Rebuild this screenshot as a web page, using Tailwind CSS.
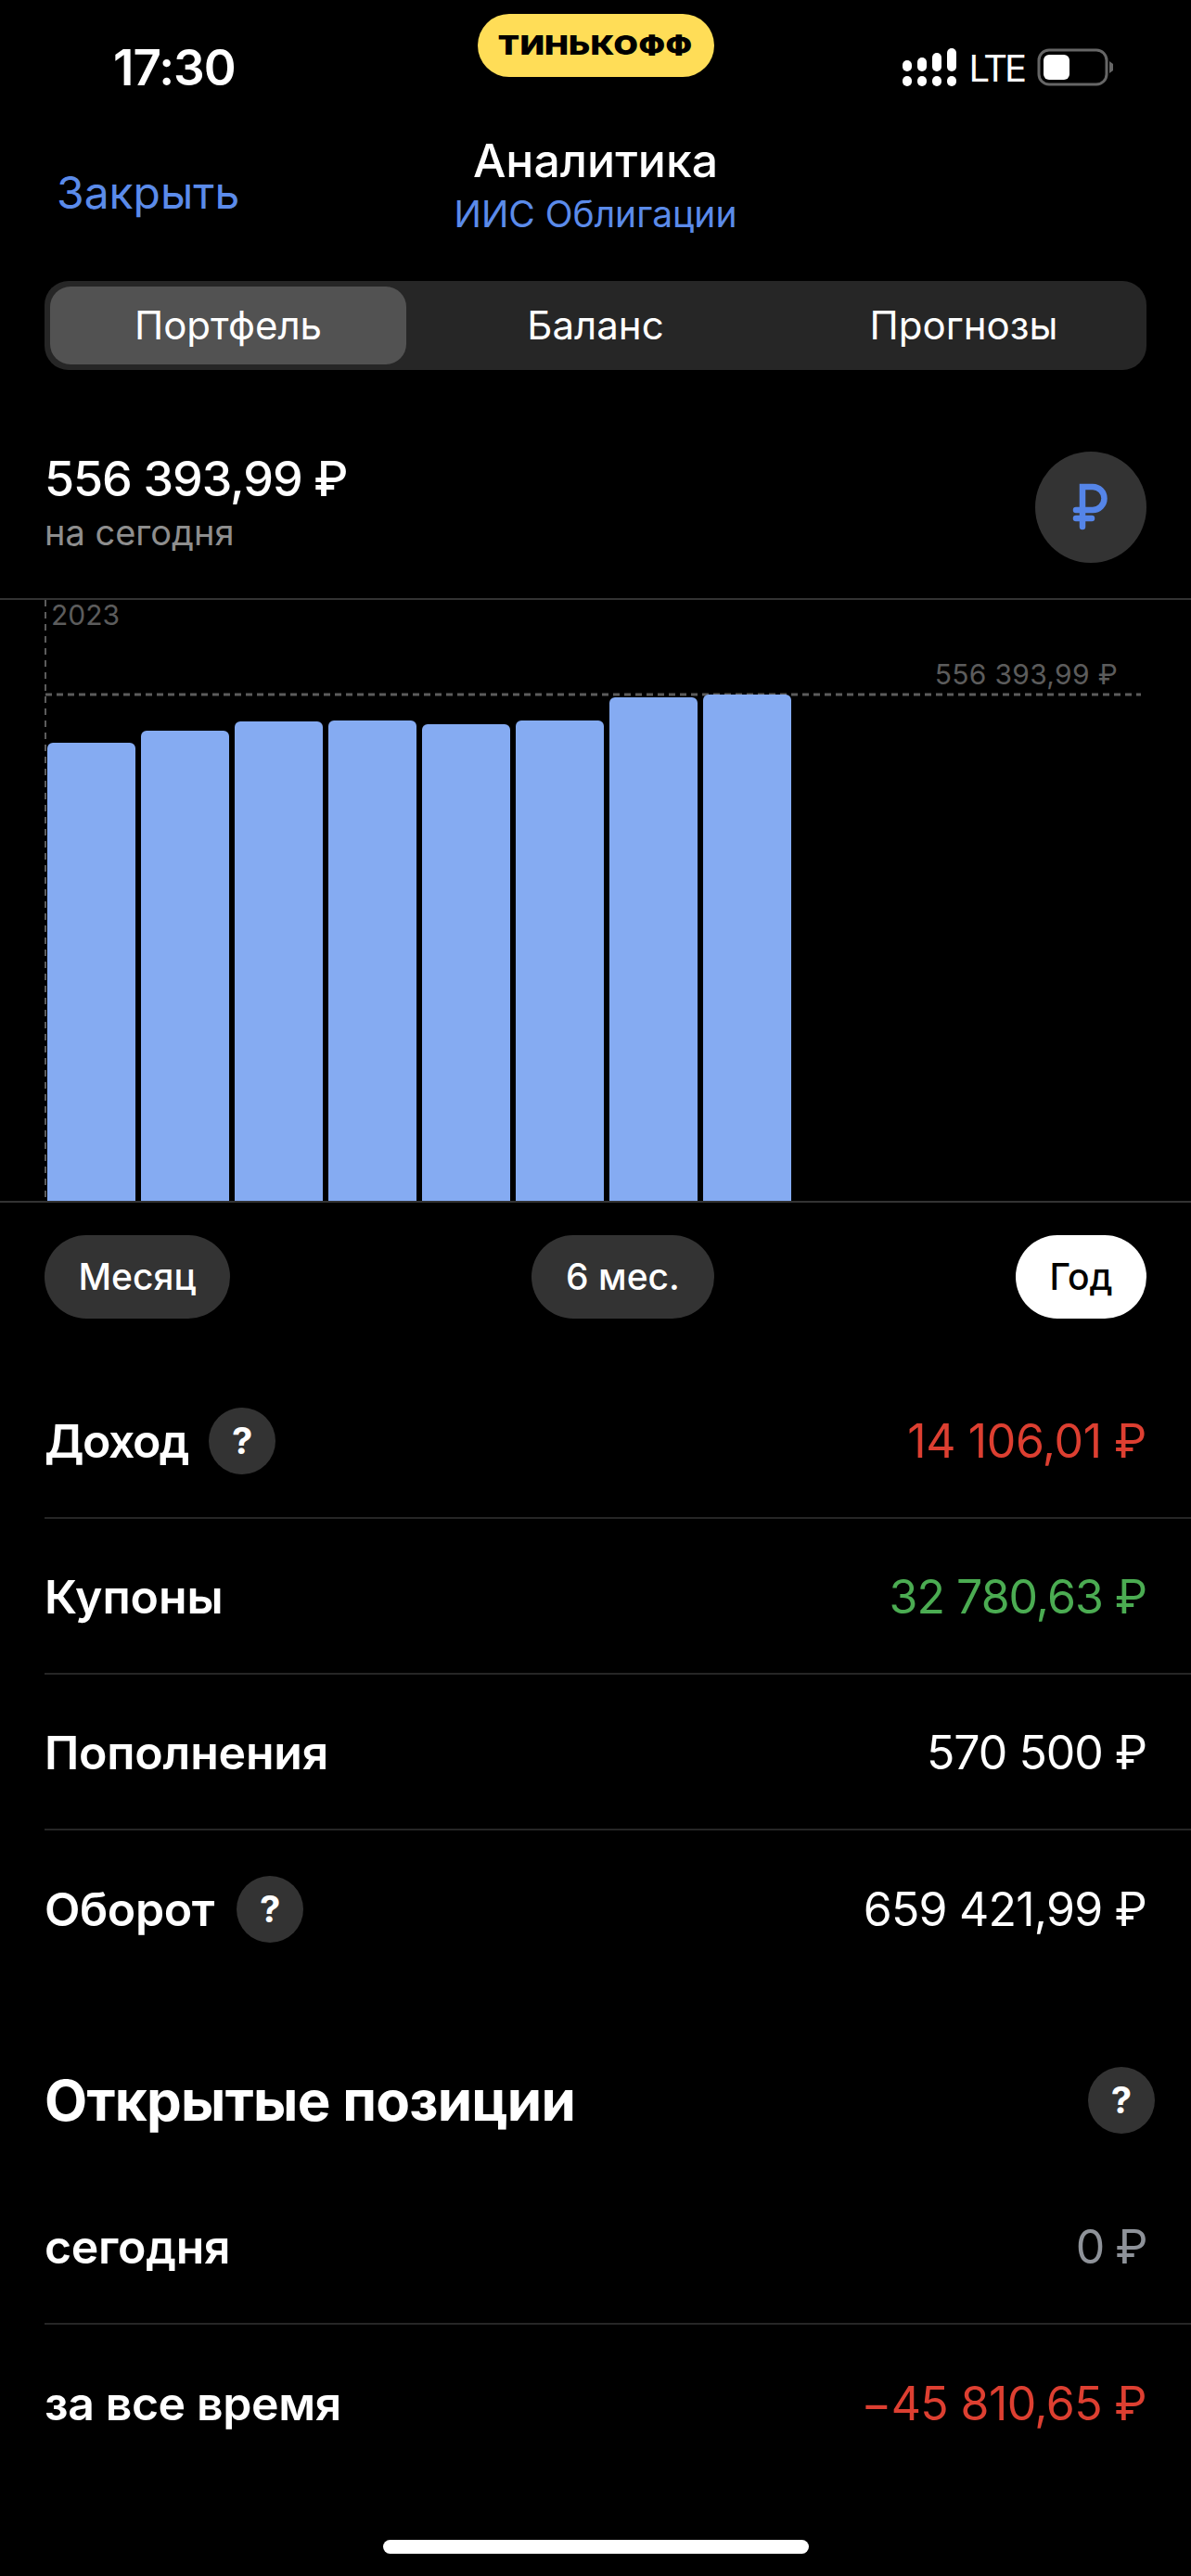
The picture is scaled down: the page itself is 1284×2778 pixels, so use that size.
<!DOCTYPE html>
<html lang="ru">
<head>
    <meta charset="UTF-8">
    <meta name="viewport" content="width=device-width, initial-scale=1.0">
    <title>Аналитика</title>
    <script src="https://cdn.jsdelivr.net/npm/@tailwindcss/browser@4"></script>
</head>
<body class="bg-black text-white font-['Inter','Noto_Sans',sans-serif] w-[1284px] h-[2778px] overflow-hidden">

    <!-- Status bar -->
    <div class="grid grid-cols-[1fr_255px_1fr] h-[144px]">
        <div class="pl-[122px] pt-[2px] self-center text-[53px] font-semibold leading-[60px] tracking-[-1px]">17:30</div>
        <div class="mt-[15px] h-[68px] rounded-[34px] bg-[#ffdd57] flex items-center justify-center">
            <span class="text-black text-[28px] font-black leading-none tracking-[0.5px] scale-x-[1.21]">ТИНЬКОФФ</span>
        </div>
        <div class="flex items-start pl-[203px]">
            <svg width="66" height="42" viewBox="0 0 66 42" class="mt-[52px]" fill="#fff">
                <rect x="0" y="13" width="10" height="12" rx="5"/>
                <rect x="16" y="10" width="10" height="15" rx="5"/>
                <rect x="32" y="5" width="10" height="20" rx="5"/>
                <rect x="48" y="0" width="10" height="25" rx="5"/>
                <rect x="0" y="30" width="10" height="11" rx="5"/>
                <rect x="16" y="30" width="10" height="11" rx="5"/>
                <rect x="32" y="30" width="10" height="11" rx="5"/>
                <rect x="48" y="30" width="10" height="11" rx="5"/>
            </svg>
            <span class="mt-[51px] ml-[6px] text-[40px] leading-[46px] font-normal tracking-[-3px] w-[73px]">LTE</span>
            <svg width="86" height="44" viewBox="0 0 86 44" class="mt-[51px]">
                <rect x="2" y="3" width="73" height="37" rx="11" fill="none" stroke="#666" stroke-width="3"/>
                <rect x="7" y="8" width="28" height="27" rx="6" fill="#fff"/>
                <path d="M78 15 L82 18 V25 L78 28 Z" fill="#666"/>
            </svg>
        </div>
    </div>

    <!-- Nav -->
    <div class="grid grid-cols-[1fr_auto_1fr] h-[159px]">
        <div class="pl-[61px] mt-[34px] text-[#5b8bea] text-[48px] leading-[60px]">Закрыть</div>
        <div class="text-center">
            <div class="text-[50px] leading-[58px] font-medium">Аналитика</div>
            <div class="mt-[7px] text-[#5b8bea] text-[39px] leading-[44px]">ИИС Облигации</div>
        </div>
        <div></div>
    </div>

    <!-- Tabs -->
    <div class="mx-[48px] h-[96px] p-[6px] rounded-[26px] bg-[#262626] grid grid-cols-3 text-[42px] leading-[84px] text-center">
        <div class="mr-[8px] rounded-[22px] bg-[#525252]">Портфель</div>
        <div>Баланс</div>
        <div class="pl-[10px]">Прогнозы</div>
    </div>

    <!-- Balance -->
    <div class="h-[248px] px-[48px] flex justify-between border-b-2 border-[#333]">
        <div class="pt-[88px]">
            <div class="text-[52px] leading-[60px] font-medium tracking-[-1.1px]">556 393,99 ₽</div>
            <div class="mt-[5px] text-[#8e8e8e] text-[38px] leading-[44px]">на сегодня</div>
        </div>
        <div class="mt-[88px] w-[120px] h-[120px] rounded-full bg-[#333]">
            <svg width="120" height="120" viewBox="0 0 120 120" fill="none" stroke="#5585e8" stroke-width="6.5" stroke-linecap="round">
                <path d="M51 81 V38 H62 a12.5 12.5 0 0 1 0 25 H44"/>
                <path d="M44 72 H61"/>
            </svg>
        </div>
    </div>

    <!-- Chart -->
    <div class="relative h-[650px] border-b-2 border-[#333] pl-[51px] flex items-end gap-[6px]">
        <svg class="absolute left-0 top-0" width="1284" height="648" fill="none" stroke="#5c5c5c" stroke-width="2">
            <path d="M49 0 V648" stroke-dasharray="7 6"/>
            <path d="M49 102 H1230" stroke-width="3" stroke-dasharray="7 5"/>
        </svg>
        <span class="absolute left-[55px] top-[-2px] text-[#5c5c5c] text-[30px] leading-[36px]">2023</span>
        <span class="absolute right-[79px] top-[62px] text-[#5c5c5c] text-[30px] leading-[36px] tracking-[0.3px]">556 393,99 ₽</span>
        <div class="relative w-[95px] h-[494px] rounded-t-[6px] bg-[#85abf2]"></div>
        <div class="relative w-[95px] h-[507px] rounded-t-[6px] bg-[#85abf2]"></div>
        <div class="relative w-[95px] h-[517px] rounded-t-[6px] bg-[#85abf2]"></div>
        <div class="relative w-[95px] h-[518px] rounded-t-[6px] bg-[#85abf2]"></div>
        <div class="relative w-[95px] h-[514px] rounded-t-[6px] bg-[#85abf2]"></div>
        <div class="relative w-[95px] h-[518px] rounded-t-[6px] bg-[#85abf2]"></div>
        <div class="relative w-[95px] h-[543px] rounded-t-[6px] bg-[#85abf2]"></div>
        <div class="relative w-[95px] h-[546px] rounded-t-[6px] bg-[#85abf2]"></div>
    </div>

    <!-- Period -->
    <div class="mt-[35px] px-[48px] flex justify-between text-[39px] leading-[90px] font-medium text-center">
        <div class="w-[200px] rounded-full bg-[#333]">Месяц</div>
        <div class="w-[197px] rounded-full bg-[#333]">6 мес.</div>
        <div class="w-[141px] rounded-full bg-white text-black">Год</div>
    </div>

    <!-- Totals -->
    <div class="mt-[48px] ml-[48px] text-[50px]">
        <div class="h-[168px] pt-[2px] pr-[48px] flex items-center border-b-2 border-[#262626]">
            <span class="font-semibold tracking-[-1.5px]">Доход</span>
            <span class="ml-[22px] w-[72px] h-[72px] rounded-full bg-[#333] text-[40px] font-bold leading-[72px] text-center tracking-normal">?</span>
            <span class="ml-auto text-[#dd3f31] tracking-[-0.4px]">14 106,01 ₽</span>
        </div>
        <div class="h-[168px] pt-[2px] pr-[48px] flex items-center justify-between border-b-2 border-[#262626]">
            <span class="font-semibold tracking-[-0.1px]">Купоны</span>
            <span class="text-[#4bac52] tracking-[-1px]">32 780,63 ₽</span>
        </div>
        <div class="h-[168px] pt-[2px] pr-[48px] flex items-center justify-between border-b-2 border-[#262626]">
            <span class="font-semibold tracking-[-0.2px]">Пополнения</span>
            <span class="tracking-[-1px]">570 500 ₽</span>
        </div>
        <div class="h-[168px] pt-[2px] pr-[48px] flex items-center">
            <span class="font-semibold tracking-[-0.4px]">Оборот</span>
            <span class="ml-[24px] w-[72px] h-[72px] rounded-full bg-[#333] text-[40px] font-bold leading-[72px] text-center">?</span>
            <span class="ml-auto tracking-[-0.8px]">659 421,99 ₽</span>
        </div>
    </div>

    <!-- Open positions -->
    <div class="mt-[87px] ml-[48px] pr-[39px] flex items-center justify-between h-[72px]">
        <h2 class="text-[60px] font-bold leading-[72px] tracking-[-0.75px]">Открытые позиции</h2>
        <span class="w-[72px] h-[72px] rounded-full bg-[#333] text-[40px] font-bold leading-[72px] text-center">?</span>
    </div>
    <div class="mt-[38px] ml-[48px] text-[50px]">
        <div class="h-[168px] pt-[2px] pr-[48px] flex items-center justify-between border-b-2 border-[#262626]">
            <span class="font-semibold tracking-[-0.3px]">сегодня</span>
            <span class="text-[#8e9299] tracking-[-1.5px]">0 ₽</span>
        </div>
        <div class="h-[168px] pt-[2px] pr-[48px] flex items-center justify-between">
            <span class="font-semibold tracking-[-0.4px]">за все время</span>
            <span class="text-[#dd3f31] tracking-[-0.6px]">−45 810,65 ₽</span>
        </div>
    </div>

    <!-- Home indicator -->
    <div class="mt-[64px] mx-auto w-[459px] h-[15px] rounded-full bg-white"></div>

</body>
</html>
